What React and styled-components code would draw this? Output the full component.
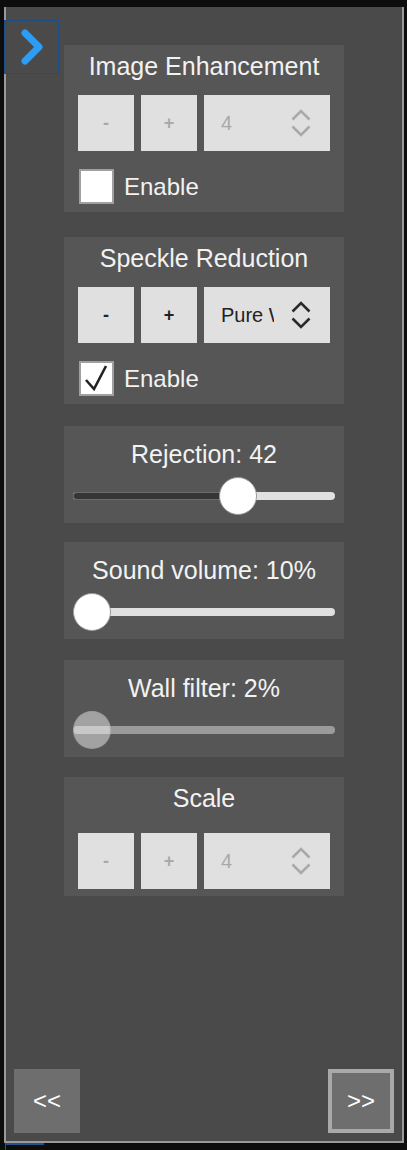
import { useState } from "react";
import styled, { createGlobalStyle } from "styled-components";

const GlobalStyle = createGlobalStyle`
  html, body {
    margin: 0;
    padding: 0;
    background: #0d0d0d;
    font-family: "Liberation Sans", Arial, sans-serif;
  }
`;

const Page = styled.div`
  padding-top: 7px;
  padding-left: 4px;
`;

const Panel = styled.div`
  position: relative;
  box-sizing: border-box;
  width: 400px;
  height: 1136px;
  background: #4a4a4a;
  border: 2px solid #9a9a9a;
  border-top: none;
  display: flex;
  flex-direction: column;
`;

const Toggle = styled.button`
  position: absolute;
  left: -2px;
  top: 13px;
  width: 55px;
  height: 54px;
  box-sizing: border-box;
  padding: 0;
  background: #4a4a4a;
  border: 1px solid #1d4f86;
  display: flex;
  align-items: center;
  justify-content: center;
  cursor: pointer;
`;

const Content = styled.div`
  display: flex;
  flex-direction: column;
  align-items: center;
  padding-top: 38px;
`;

const Section = styled.div`
  box-sizing: border-box;
  width: 280px;
  height: ${(p) => p.$h}px;
  margin-top: ${(p) => p.$mt || 0}px;
  padding: ${(p) => p.$pt}px 14px 0;
  background: #565656;
  display: flex;
  flex-direction: column;
`;

const Title = styled.div`
  color: #f2f2f2;
  font-size: 25px;
  line-height: 28px;
  text-align: center;
  white-space: nowrap;
`;

const Row = styled.div`
  display: flex;
  gap: 7px;
  margin-top: ${(p) => p.$mt}px;
`;

const StepButton = styled.button`
  width: 56px;
  height: 56px;
  padding: 0;
  border: none;
  background: #e0e0e0;
  color: ${(p) => (p.disabled ? "#a9a9a9" : "#222")};
  font-family: "Liberation Sans", Arial, sans-serif;
  font-size: 18px;
  font-weight: bold;
`;

const Select = styled.div`
  box-sizing: border-box;
  width: 126px;
  height: 56px;
  background: #e0e0e0;
  display: flex;
  align-items: center;
  padding: 0 19px 0 17px;
  color: ${(p) => (p.$disabled ? "#a9a9a9" : "#222")};
`;

const SelectText = styled.span`
  width: 53px;
  overflow: hidden;
  white-space: nowrap;
  font-size: 20px;
`;

const SelectIcon = styled.svg`
  margin-left: auto;
`;

const CheckRow = styled.label`
  display: flex;
  align-items: center;
  gap: 10px;
  margin-top: 18px;
  margin-left: 1px;
  color: #f2f2f2;
  font-size: 24px;
`;

const Box = styled.span`
  box-sizing: border-box;
  width: 35px;
  height: 35px;
  background: #fff;
  border: 2px solid #a0a0a0;
  display: flex;
`;

const SliderWrap = styled.div`
  position: relative;
  height: 38px;
  margin: 9px -5px 0;
`;

const Track = styled.div`
  position: absolute;
  left: 0;
  right: 0;
  top: 15px;
  height: 8px;
  border-radius: 4px;
  background: ${(p) => (p.$disabled ? "rgba(224,224,224,0.5)" : "#e0e0e0")};
  overflow: hidden;
`;

const Fill = styled.div`
  height: 100%;
  background: #353535;
  border-radius: 4px 0 0 4px;
  box-shadow: inset 0 0 0 1px #6a6a6a;
`;

const Thumb = styled.div`
  position: absolute;
  top: 0;
  width: 38px;
  height: 38px;
  box-sizing: border-box;
  border-radius: 50%;
  background: ${(p) => (p.$disabled ? "rgba(255,255,255,0.45)" : "#fff")};
  border: 1px solid ${(p) => (p.$disabled ? "rgba(150,150,150,0.5)" : "#9a9a9a")};
`;

const Footer = styled.div`
  margin-top: auto;
  display: flex;
  justify-content: space-between;
  padding: 0 8px 8px;
`;

const NavButton = styled.button`
  box-sizing: border-box;
  width: 66px;
  height: 64px;
  padding: 0;
  background: #6e6e6e;
  border: ${(p) => (p.$focused ? "4px solid #a9a9a9" : "none")};
  color: #fff;
  font-family: "Liberation Sans", Arial, sans-serif;
  font-size: 24px;
`;

const Outline = styled.div`
  width: 38px;
  height: 5px;
  margin-left: 1px;
  border-top: 2px solid #23538a;
  border-left: 1px solid #23538a;
`;

const Chevrons = ({ color }) => (
  <SelectIcon width="20" height="28" viewBox="0 0 20 28">
    <polyline points="1.5,10.5 10,2 18.5,10.5" fill="none" stroke={color} strokeWidth="2.6" />
    <polyline points="1.5,17.5 10,26 18.5,17.5" fill="none" stroke={color} strokeWidth="2.6" />
  </SelectIcon>
);

const Stepper = ({ value, disabled, mt }) => (
  <Row $mt={mt}>
    <StepButton disabled={disabled}>-</StepButton>
    <StepButton disabled={disabled}>+</StepButton>
    <Select $disabled={disabled}>
      <SelectText>{value}</SelectText>
      <Chevrons color={disabled ? "#a9a9a9" : "#2a2a2a"} />
    </Select>
  </Row>
);

const Check = ({ checked, onToggle }) => (
  <CheckRow onClick={onToggle}>
    <Box>
      {checked && (
        <svg width="31" height="31" viewBox="0 0 31 31">
          <polyline points="5,17 13,26 25,3" fill="none" stroke="#222" strokeWidth="2.6" />
        </svg>
      )}
    </Box>
    Enable
  </CheckRow>
);

const Slider = ({ frac, disabled }) => {
  const left = frac * (262 - 38);
  return (
    <SliderWrap>
      <Track $disabled={disabled}>
        {frac > 0 && <Fill style={{ width: left + 19 }} />}
      </Track>
      <Thumb $disabled={disabled} style={{ left }} />
    </SliderWrap>
  );
};

export default function App() {
  const [enhance, setEnhance] = useState(false);
  const [speckle, setSpeckle] = useState(true);

  return (
    <Page>
      <GlobalStyle />
      <Panel>
        <Toggle>
          <svg width="30" height="40" viewBox="0 0 30 40">
            <polyline points="8,6 22,20 8,34" fill="none" stroke="#2d9cf5" strokeWidth="7" strokeLinecap="round" strokeLinejoin="round" />
          </svg>
        </Toggle>
        <Content>
          <Section $h={167} $pt={7}>
            <Title>Image Enhancement</Title>
            <Stepper value="4" disabled mt={15} />
            <Check checked={enhance} onToggle={() => setEnhance(!enhance)} />
          </Section>

          <Section $h={167} $pt={7} $mt={25}>
            <Title>Speckle Reduction</Title>
            <Stepper value="Pure Wave" mt={15} />
            <Check checked={speckle} onToggle={() => setSpeckle(!speckle)} />
          </Section>

          <Section $h={97} $pt={14} $mt={22}>
            <Title>Rejection: 42</Title>
            <Slider frac={0.652} />
          </Section>

          <Section $h={97} $pt={14} $mt={19}>
            <Title>Sound volume: 10%</Title>
            <Slider frac={0} />
          </Section>

          <Section $h={97} $pt={14} $mt={21}>
            <Title>Wall filter: 2%</Title>
            <Slider frac={0} disabled />
          </Section>

          <Section $h={119} $pt={7} $mt={20}>
            <Title>Scale</Title>
            <Stepper value="4" disabled mt={21} />
          </Section>
        </Content>
        <Footer>
          <NavButton>&lt;&lt;</NavButton>
          <NavButton $focused>&gt;&gt;</NavButton>
        </Footer>
      </Panel>
      <Outline />
    </Page>
  );
}
